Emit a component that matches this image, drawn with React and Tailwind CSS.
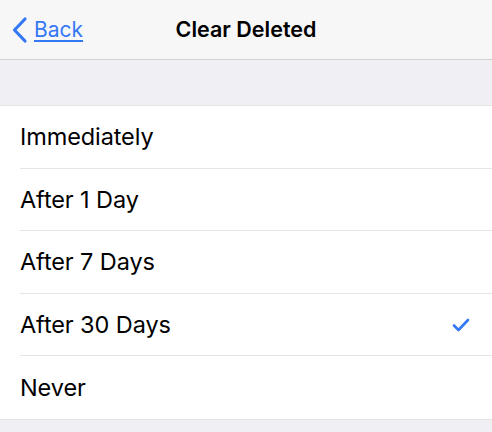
import React from "react";

const options = ["Immediately", "After 1 Day", "After 7 Days", "After 30 Days", "Never"];

export default function App() {
    const selected = "After 30 Days";
    return (
        <div className="w-[492px] h-[432px] bg-[#efeff4] overflow-hidden" style={{ fontFamily: "Inter, 'Liberation Sans', sans-serif" }}>
            <div className="relative h-[60px] bg-[#f7f7f7] border-b border-[#cfcfd2] flex items-center justify-center">
                <a href="#" className="absolute left-[11px] top-0 h-full flex items-center gap-[6px] text-[#3478f6]">
                    <svg width="17" height="28" viewBox="0 0 17 28" fill="none">
                        <path d="M14 3 L3.5 14 L14 25" stroke="#3478f6" strokeWidth="3.2" strokeLinecap="round" strokeLinejoin="round" />
                    </svg>
                    <span className="text-[21px] underline underline-offset-[3px] leading-none">Back</span>
                </a>
                <div className="text-[21.5px] font-semibold text-black">Clear Deleted</div>
            </div>
            <div className="h-[45px]" />
            <div className="bg-white border-t border-b border-[#e3e3e6]">
                {options.map((o, i) => (
                    <div key={o} className="pl-5">
                        <div className={`h-[62.6px] flex items-center pr-5 ${i < options.length - 1 ? "border-b border-[#e5e5e8]" : ""}`}>
                            <span className="flex-1 text-[23.5px] text-black tracking-[-0.1px]">{o}</span>
                            {selected === o && (
                                <svg width="18" height="14" viewBox="0 0 18 14" fill="none" className="mr-[2px]">
                                    <path d="M2 7.5 L6.5 12 L16 2" stroke="#3478f6" strokeWidth="2.6" strokeLinecap="round" strokeLinejoin="round" />
                                </svg>
                            )}
                        </div>
                    </div>
                ))}
            </div>
        </div>
    );
}
